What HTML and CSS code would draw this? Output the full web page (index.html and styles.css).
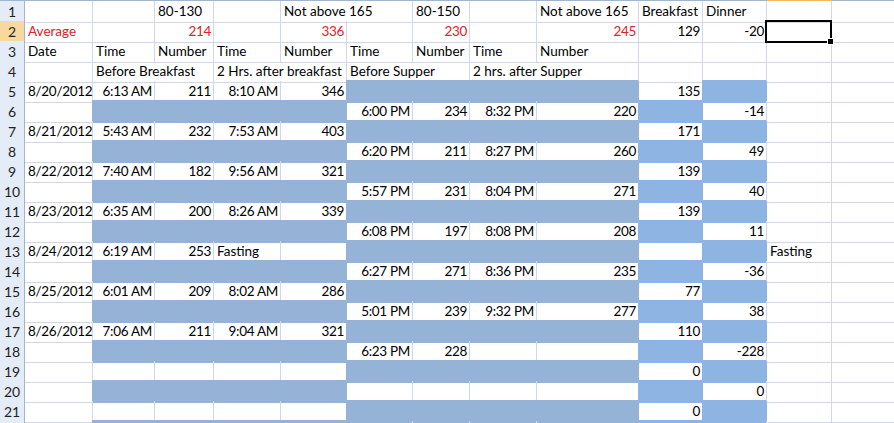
FILE: index.html
```html
<!DOCTYPE html>
<html>
<head>
<meta charset="utf-8">
<link rel="stylesheet" href="styles.css">
</head>
<body>
<div class="sheet">
  <div class="colbar"><div></div><div></div><div></div><div></div><div></div><div></div><div></div><div></div><div></div><div></div><div></div><div></div><div class="csel"></div><div></div></div>

  <div class="row"><div class="rh">1</div><div class="c"></div><div class="c"></div><div class="c">80-130</div><div class="c"></div><div class="c ov">Not above 165</div><div class="c"></div><div class="c">80-150</div><div class="c"></div><div class="c">Not above 165</div><div class="c">Breakfast</div><div class="c">Dinner</div><div class="c"></div><div class="c"></div></div>

  <div class="row"><div class="rh on">2</div><div class="c red">Average</div><div class="c"></div><div class="c r red">214</div><div class="c"></div><div class="c r red">336</div><div class="c"></div><div class="c r red">230</div><div class="c"></div><div class="c r red">245</div><div class="c r">129</div><div class="c r">-20</div><div class="c sel"><span class="cur"></span><span class="handle"></span></div><div class="c"></div></div>

  <div class="row"><div class="rh">3</div><div class="c">Date</div><div class="c">Time</div><div class="c">Number</div><div class="c">Time</div><div class="c">Number</div><div class="c">Time</div><div class="c">Number</div><div class="c">Time</div><div class="c">Number</div><div class="c"></div><div class="c"></div><div class="c"></div><div class="c"></div></div>

  <div class="row"><div class="rh">4</div><div class="c"></div><div class="c ov">Before Breakfast</div><div class="c"></div><div class="c ov">2 Hrs. after breakfast</div><div class="c"></div><div class="c ov">Before Supper</div><div class="c"></div><div class="c ov">2 hrs. after Supper</div><div class="c"></div><div class="c"></div><div class="c"></div><div class="c"></div><div class="c"></div></div>

  <div class="row"><div class="rh">5</div><div class="c r">8/20/2012</div><div class="c r">6:13 AM</div><div class="c r">211</div><div class="c r">8:10 AM</div><div class="c r">346</div><div class="c b"></div><div class="c b"></div><div class="c b"></div><div class="c b"></div><div class="c r">135</div><div class="c k"></div><div class="c"></div><div class="c"></div></div>

  <div class="row"><div class="rh">6</div><div class="c"></div><div class="c b"></div><div class="c b"></div><div class="c b"></div><div class="c b"></div><div class="c r">6:00 PM</div><div class="c r">234</div><div class="c r">8:32 PM</div><div class="c r">220</div><div class="c k"></div><div class="c r">-14</div><div class="c"></div><div class="c"></div></div>

  <div class="row"><div class="rh">7</div><div class="c r">8/21/2012</div><div class="c r">5:43 AM</div><div class="c r">232</div><div class="c r">7:53 AM</div><div class="c r">403</div><div class="c b"></div><div class="c b"></div><div class="c b"></div><div class="c b"></div><div class="c r">171</div><div class="c k"></div><div class="c"></div><div class="c"></div></div>

  <div class="row"><div class="rh">8</div><div class="c"></div><div class="c b"></div><div class="c b"></div><div class="c b"></div><div class="c b"></div><div class="c r">6:20 PM</div><div class="c r">211</div><div class="c r">8:27 PM</div><div class="c r">260</div><div class="c k"></div><div class="c r">49</div><div class="c"></div><div class="c"></div></div>

  <div class="row"><div class="rh">9</div><div class="c r">8/22/2012</div><div class="c r">7:40 AM</div><div class="c r">182</div><div class="c r">9:56 AM</div><div class="c r">321</div><div class="c b"></div><div class="c b"></div><div class="c b"></div><div class="c b"></div><div class="c r">139</div><div class="c k"></div><div class="c"></div><div class="c"></div></div>

  <div class="row"><div class="rh">10</div><div class="c"></div><div class="c b"></div><div class="c b"></div><div class="c b"></div><div class="c b"></div><div class="c r">5:57 PM</div><div class="c r">231</div><div class="c r">8:04 PM</div><div class="c r">271</div><div class="c k"></div><div class="c r">40</div><div class="c"></div><div class="c"></div></div>

  <div class="row"><div class="rh">11</div><div class="c r">8/23/2012</div><div class="c r">6:35 AM</div><div class="c r">200</div><div class="c r">8:26 AM</div><div class="c r">339</div><div class="c b"></div><div class="c b"></div><div class="c b"></div><div class="c b"></div><div class="c r">139</div><div class="c k"></div><div class="c"></div><div class="c"></div></div>

  <div class="row"><div class="rh">12</div><div class="c"></div><div class="c b"></div><div class="c b"></div><div class="c b"></div><div class="c b"></div><div class="c r">6:08 PM</div><div class="c r">197</div><div class="c r">8:08 PM</div><div class="c r">208</div><div class="c k"></div><div class="c r">11</div><div class="c"></div><div class="c"></div></div>

  <div class="row"><div class="rh">13</div><div class="c r">8/24/2012</div><div class="c r">6:19 AM</div><div class="c r">253</div><div class="c">Fasting</div><div class="c"></div><div class="c b"></div><div class="c b"></div><div class="c b"></div><div class="c b"></div><div class="c"></div><div class="c k"></div><div class="c">Fasting</div><div class="c"></div></div>

  <div class="row"><div class="rh">14</div><div class="c"></div><div class="c b"></div><div class="c b"></div><div class="c b"></div><div class="c b"></div><div class="c r">6:27 PM</div><div class="c r">271</div><div class="c r">8:36 PM</div><div class="c r">235</div><div class="c k"></div><div class="c r">-36</div><div class="c"></div><div class="c"></div></div>

  <div class="row"><div class="rh">15</div><div class="c r">8/25/2012</div><div class="c r">6:01 AM</div><div class="c r">209</div><div class="c r">8:02 AM</div><div class="c r">286</div><div class="c b"></div><div class="c b"></div><div class="c b"></div><div class="c b"></div><div class="c r">77</div><div class="c k"></div><div class="c"></div><div class="c"></div></div>

  <div class="row"><div class="rh">16</div><div class="c"></div><div class="c b"></div><div class="c b"></div><div class="c b"></div><div class="c b"></div><div class="c r">5:01 PM</div><div class="c r">239</div><div class="c r">9:32 PM</div><div class="c r">277</div><div class="c k"></div><div class="c r">38</div><div class="c"></div><div class="c"></div></div>

  <div class="row"><div class="rh">17</div><div class="c r">8/26/2012</div><div class="c r">7:06 AM</div><div class="c r">211</div><div class="c r">9:04 AM</div><div class="c r">321</div><div class="c b"></div><div class="c b"></div><div class="c b"></div><div class="c b"></div><div class="c r">110</div><div class="c k"></div><div class="c"></div><div class="c"></div></div>

  <div class="row"><div class="rh">18</div><div class="c"></div><div class="c b"></div><div class="c b"></div><div class="c b"></div><div class="c b"></div><div class="c r">6:23 PM</div><div class="c r">228</div><div class="c"></div><div class="c"></div><div class="c k"></div><div class="c r">-228</div><div class="c"></div><div class="c"></div></div>

  <div class="row"><div class="rh">19</div><div class="c"></div><div class="c"></div><div class="c"></div><div class="c"></div><div class="c"></div><div class="c b"></div><div class="c b"></div><div class="c b"></div><div class="c b"></div><div class="c r">0</div><div class="c k"></div><div class="c"></div><div class="c"></div></div>

  <div class="row"><div class="rh">20</div><div class="c"></div><div class="c b"></div><div class="c b"></div><div class="c b"></div><div class="c b"></div><div class="c"></div><div class="c"></div><div class="c"></div><div class="c"></div><div class="c k"></div><div class="c r">0</div><div class="c"></div><div class="c"></div></div>

  <div class="row"><div class="rh">21</div><div class="c"></div><div class="c"></div><div class="c"></div><div class="c"></div><div class="c"></div><div class="c b"></div><div class="c b"></div><div class="c b"></div><div class="c b"></div><div class="c r">0</div><div class="c k"></div><div class="c"></div><div class="c"></div></div>

  <div class="row"><div class="rh"></div><div class="c"></div><div class="c b"></div><div class="c b"></div><div class="c b"></div><div class="c b"></div><div class="c"></div><div class="c"></div><div class="c"></div><div class="c"></div><div class="c k"></div><div class="c"></div><div class="c"></div><div class="c"></div></div>
</div>
</body>
</html>
```

FILE: styles.css
```css
html, body {
  margin: 0;
  padding: 0;
  background: #ffffff;
}

body {
  font-family: Lato, "Liberation Sans", sans-serif;
  font-size: 13.5px;
  color: #000000;
}

.sheet {
  width: 894px;
  height: 423px;
  overflow: hidden;
}

.colbar,
.row {
  display: grid;
  grid-template-columns: 25px 68px 62px 59px 67px 66px 66px 57px 67px 102px 64px 64px 65px 63px;
}

.colbar {
  height: 1px;
  background: #9eb6ce;
}

.colbar .csel {
  background: #f4b860;
}

.row {
  height: 20px;
}

.rh {
  background: #e4ecf7;
  border-right: 1px solid #9eb6ce;
  border-bottom: 1px solid #c5d3e6;
  text-align: center;
  line-height: 21px;
  font-size: 14px;
  color: #1f1f1f;
}

.rh.on {
  background: #f8d89e;
  border-bottom-color: #f0b868;
}

.c {
  border-right: 1px solid #d0d7e5;
  border-bottom: 1px solid #d0d7e5;
  padding: 0 2px 0 3px;
  line-height: 21px;
  white-space: nowrap;
  min-width: 0;
  overflow: visible;
}

.r {
  text-align: right;
  letter-spacing: -0.3px;
}

.red {
  color: #e3202a;
}

.ov {
  border-right-color: transparent;
}

.b {
  background: #95b3d7;
  border-color: #95b3d7;
  box-shadow: -1px -1px 0 0 #95b3d7;
}

.k {
  background: #8db4e2;
  border-color: #8db4e2;
  box-shadow: -1px -1px 0 0 #8db4e2;
}

.sel {
  position: relative;
}

.cur {
  position: absolute;
  left: -2px;
  top: -1px;
  right: -1px;
  bottom: -1px;
  border: 2px solid #000000;
}

.handle {
  position: absolute;
  right: -3px;
  bottom: -3px;
  width: 5px;
  height: 5px;
  background: #000000;
  border: 1px solid #ffffff;
}
```
